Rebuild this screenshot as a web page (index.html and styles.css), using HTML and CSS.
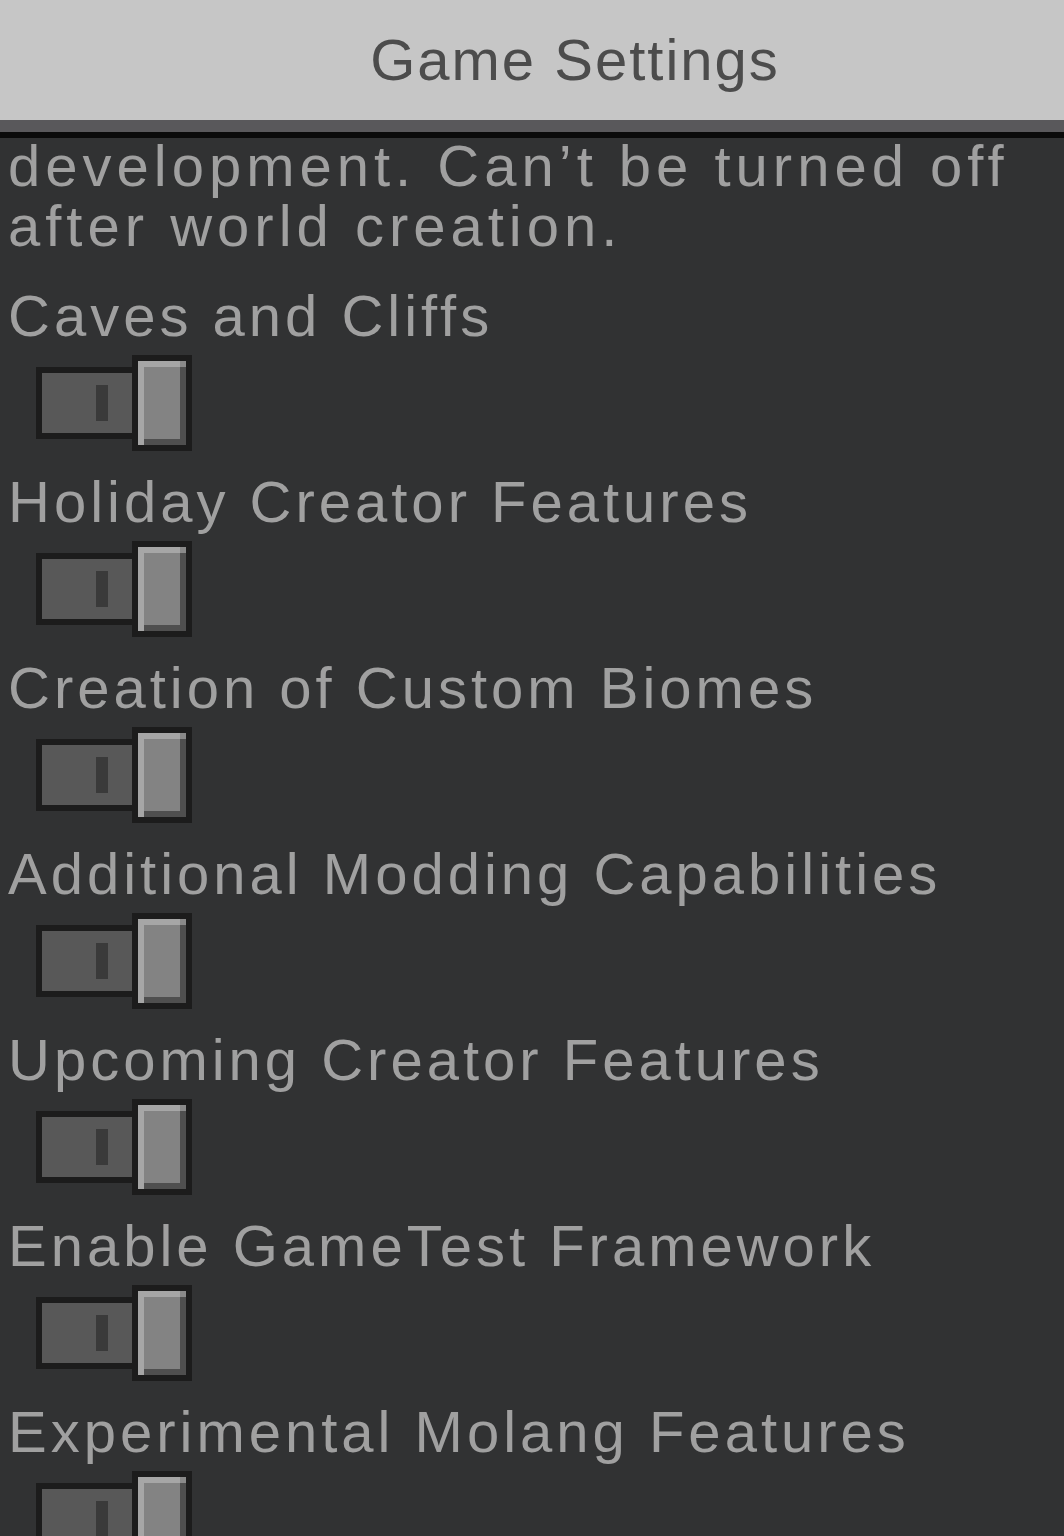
FILE: index.html
```html
<!DOCTYPE html>
<html lang="en">
<head>
    <meta charset="UTF-8">
    <meta name="viewport" content="width=device-width, initial-scale=1.0">
    <title>Game Settings</title>
    <link rel="stylesheet" href="styles.css">
</head>
<body>
    <div class="header">
        <h1 class="title">Game Settings</h1>
    </div>

    <div class="content">
        <p class="description">development. Can’t be turned off<br>after world creation.</p>

        <div class="setting">
            <div class="setting-label">Caves and Cliffs</div>
            <div class="toggle">
                <div class="toggle-track"><span class="toggle-notch"></span></div>
                <div class="toggle-knob"></div>
            </div>
        </div>

        <div class="setting">
            <div class="setting-label">Holiday Creator Features</div>
            <div class="toggle">
                <div class="toggle-track"><span class="toggle-notch"></span></div>
                <div class="toggle-knob"></div>
            </div>
        </div>

        <div class="setting">
            <div class="setting-label">Creation of Custom Biomes</div>
            <div class="toggle">
                <div class="toggle-track"><span class="toggle-notch"></span></div>
                <div class="toggle-knob"></div>
            </div>
        </div>

        <div class="setting">
            <div class="setting-label">Additional Modding Capabilities</div>
            <div class="toggle">
                <div class="toggle-track"><span class="toggle-notch"></span></div>
                <div class="toggle-knob"></div>
            </div>
        </div>

        <div class="setting">
            <div class="setting-label">Upcoming Creator Features</div>
            <div class="toggle">
                <div class="toggle-track"><span class="toggle-notch"></span></div>
                <div class="toggle-knob"></div>
            </div>
        </div>

        <div class="setting">
            <div class="setting-label">Enable GameTest Framework</div>
            <div class="toggle">
                <div class="toggle-track"><span class="toggle-notch"></span></div>
                <div class="toggle-knob"></div>
            </div>
        </div>

        <div class="setting">
            <div class="setting-label">Experimental Molang Features</div>
            <div class="toggle">
                <div class="toggle-track"><span class="toggle-notch"></span></div>
                <div class="toggle-knob"></div>
            </div>
        </div>
    </div>
</body>
</html>
```

FILE: styles.css
```css
html, body {
    margin: 0;
    height: 1536px;
    overflow: hidden;
}
body {
    font-family: "Liberation Sans", Arial, sans-serif;
    font-size: 58px;
    letter-spacing: 4px;
    background: #313233;
    color: #a0a0a0;
}
.header {
    height: 120px;
    background: #c6c6c6;
    border-bottom: 12px solid #59585b;
    padding-left: 86px;
    display: flex;
    justify-content: center;
}
.title {
    margin: 0;
    font-size: 58px;
    font-weight: normal;
    letter-spacing: 2px;
    line-height: 120px;
    color: #4c4c4c;
}
.content {
    border-top: 6px solid #0a0a0a;
}
.description {
    margin: -2px 0 0 0;
    padding-left: 8px;
    line-height: 60px;
    letter-spacing: 5px;
}
.setting {
    margin-bottom: 21px;
}
.description + .setting {
    margin-top: 30px;
}
.setting-label {
    padding-left: 8px;
    line-height: 60px;
    margin-bottom: 9px;
    white-space: nowrap;
}
.toggle {
    display: flex;
    align-items: center;
    margin-left: 36px;
    height: 96px;
}
.toggle-track {
    display: flex;
    align-items: center;
    box-sizing: border-box;
    width: 96px;
    height: 72px;
    background: #585858;
    border: 6px solid #1c1c1c;
    border-right: none;
}
.toggle-notch {
    width: 12px;
    height: 36px;
    margin-left: 54px;
    background: #3a3a3a;
}
.toggle-knob {
    position: relative;
    box-sizing: border-box;
    width: 60px;
    height: 96px;
    background: #838383;
    border: 6px solid #1c1c1c;
    box-shadow: inset 6px 6px 0 #a6a6a6, inset -6px -6px 0 #4f4f4f;
}
/* top-right pixel of the bevel stays neutral */
.toggle-knob::after {
    content: "";
    position: absolute;
    top: 0;
    right: 0;
    width: 6px;
    height: 6px;
    background: #8a8a8a;
}
```
